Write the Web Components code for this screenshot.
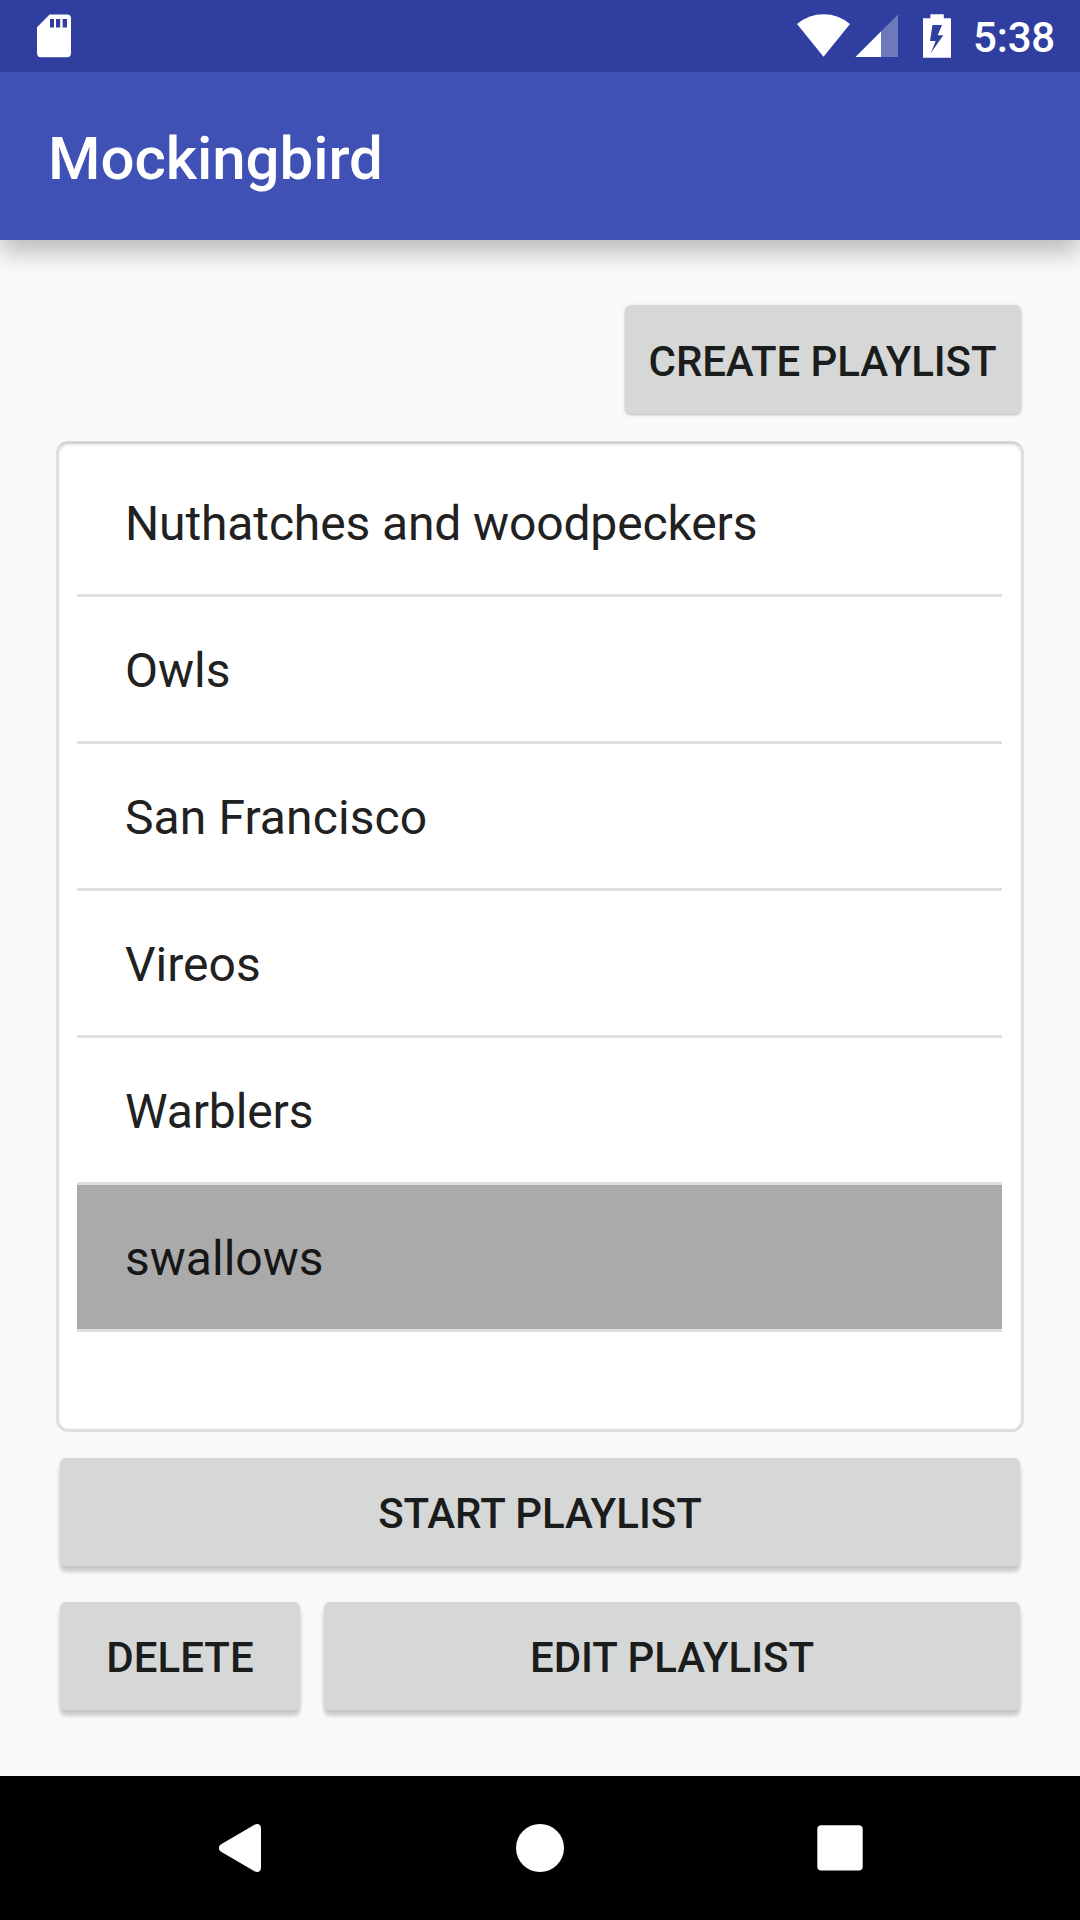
<!DOCTYPE html>
<html lang="en">
<head>
<meta charset="utf-8">
<title>Mockingbird</title>
<style>
html, body { margin: 0; padding: 0; }
body { width: 1080px; height: 1920px; overflow: hidden; background: #fafafa; font-family: Roboto, "Noto Sans", sans-serif; }
</style>
</head>
<body>
<mock-screen>
  <status-bar slot="status" time="5:38"></status-bar>
  <app-bar slot="bar">Mockingbird</app-bar>
  <raised-button slot="create" flat>CREATE PLAYLIST</raised-button>
  <playlist-card slot="list">
    <playlist-row style="letter-spacing: -.13px">Nuthatches and woodpeckers</playlist-row>
    <playlist-row>Owls</playlist-row>
    <playlist-row style="letter-spacing: .1px">San Francisco</playlist-row>
    <playlist-row>Vireos</playlist-row>
    <playlist-row style="letter-spacing: -.12px">Warblers</playlist-row>
    <playlist-row selected>swallows</playlist-row>
  </playlist-card>
  <raised-button slot="start">START PLAYLIST</raised-button>
  <raised-button slot="actions" style="flex: 0 0 240px">DELETE</raised-button>
  <raised-button slot="actions" style="flex: 1">EDIT PLAYLIST</raised-button>
  <nav-bar slot="nav"></nav-bar>
</mock-screen>
<script>
class Base extends HTMLElement {
  constructor() {
    super();
    this.attachShadow({ mode: "open" }).innerHTML = this.constructor.markup;
  }
}

customElements.define("mock-screen", class extends Base {
  static markup = `<style>
    :host { display: flex; flex-direction: column; width: 1080px; height: 1920px; background: #fafafa; }
    main { flex: 1; display: flex; flex-direction: column; padding: 65px 56px 0 56px; }
    .top { display: flex; justify-content: flex-end; padding-right: 3.5px; }
    ::slotted([slot=create]) { width: 396px; }
    ::slotted([slot=list]) { margin-top: 26.5px; }
    .bottom { display: flex; flex-direction: column; gap: 36px; padding: 26.5px 4px 0 4px; }
    .actions { display: flex; gap: 24px; }
  </style>
  <slot name="status"></slot><slot name="bar"></slot>
  <main>
    <div class="top"><slot name="create"></slot></div>
    <slot name="list"></slot>
    <div class="bottom"><slot name="start"></slot><div class="actions"><slot name="actions"></slot></div></div>
  </main>
  <slot name="nav"></slot>`;
});

customElements.define("status-bar", class extends Base {
  static markup = `<style>
    :host { display: flex; align-items: center; justify-content: space-between; height: 72px; padding: 0 25px 0 37px; background: #303f9f; color: #fff; box-sizing: border-box; }
    .right { display: flex; align-items: center; }
    svg { display: block; }
    .time { font-size: 42px; font-weight: 500; line-height: 72px; margin-left: 21px; padding-top: 2px; height: 70px; letter-spacing: -.2px; }
  </style>
  <svg width="34" height="72" viewBox="0 0 34 72"><path fill="#fff" fill-rule="evenodd" d="M12.6 14.6H30Q34 14.6 34 18.6V53Q34 57.2 30 57.2H4Q0 57.2 0 53V27.3ZM13 19V27.5H17V19ZM19 19V27.5H23.2V19ZM25.6 19V27.5H30V19Z"/></svg>
  <div class="right">
    <svg width="155" height="72" viewBox="797 0 155 72">
      <path fill="#fff" d="M823.5 56.8L797 24Q808.5 14.2 823.5 14.2T850 24Z"/>
      <path fill="#fff" fill-opacity=".3" d="M855.5 57H898V14.5Z"/>
      <path fill="#fff" d="M855.5 57H881V31.5Z"/>
      <path fill="#fff" fill-rule="evenodd" d="M930.4 14.2H943.8V18.3H951V57.7H923V18.3H930.4ZM932.5 25L930 41H935.7L930.7 53.3L943.3 35.3H937.7L942 25Z"/>
    </svg>
    <span class="time"></span>
  </div>`;
  connectedCallback() { this.shadowRoot.querySelector(".time").textContent = this.getAttribute("time"); }
});

customElements.define("app-bar", class extends Base {
  static markup = `<style>
    :host { display: flex; align-items: center; height: 168px; padding: 5px 48px 0; box-sizing: border-box; background: #3f51b5; color: #fff; font-size: 60px; font-weight: 500; line-height: 70px; letter-spacing: -.05px; position: relative; box-shadow: 0 12px 24px rgba(0,0,0,.26); clip-path: inset(0 0 -50px 0); }
  </style><span><slot></slot></span>`;
});

customElements.define("raised-button", class extends Base {
  static markup = `<style>
    :host { display: flex; align-items: center; justify-content: center; height: 108px; box-sizing: border-box; padding-top: 3px; border-radius: 6px; background: #d6d8d7; color: #1b1c1c; font-size: 42px; font-weight: 500; line-height: 50px; white-space: nowrap; box-shadow: 0 6px 4px rgba(0,0,0,.18), 0 1px 4px rgba(0,0,0,.08); }
    :host([flat]) { height: 109px; padding-top: 4px; letter-spacing: -.09px; box-shadow: 0 1px 2px rgba(0,0,0,.18), 0 1px 5px rgba(0,0,0,.1); }
  </style><span><slot></slot></span>`;
});

customElements.define("playlist-card", class extends Base {
  static markup = `<style>
    :host { display: flex; flex-direction: column; height: 991px; padding: 6.5px 19px 0 18px; box-sizing: border-box; border: 3px solid #dfdfdf; border-top-color: #d3d3d3; border-radius: 12px; background: #fff; box-shadow: inset 0 1px 3px rgba(0,0,0,.1); }
  </style><slot></slot>`;
});

customElements.define("playlist-row", class extends Base {
  static markup = `<style>
    :host { display: flex; align-items: center; height: 147px; box-sizing: border-box; padding: 3px 48px 0; border-bottom: 3px solid #dfdfdf; color: #212121; font-size: 48px; line-height: 56px; white-space: nowrap; }
    :host([selected]) { background: #aaa; color: #161616; background-clip: padding-box; }
  </style><span><slot></slot></span>`;
});

customElements.define("nav-bar", class extends Base {
  static markup = `<style>
    :host { display: flex; align-items: center; justify-content: space-between; height: 144px; padding: 0 216px; box-sizing: border-box; background: #000; }
    svg { display: block; width: 48px; height: 48px; }
  </style>
  <svg viewBox="0 0 48 48"><path fill="#fff" d="M38.5 .8C41.5 -1 45 .5 45 4V44C45 47.5 41.5 49 38.5 47.2L5.5 28C2 26 2 22 5.5 20Z"/></svg>
  <svg viewBox="0 0 48 48"><circle cx="24" cy="24" r="24" fill="#fff"/></svg>
  <svg viewBox="0 0 48 48"><rect x="1.3" y="1.2" width="45.4" height="45.4" rx="4" fill="#fff"/></svg>`;
});
</script>
</body>
</html>
